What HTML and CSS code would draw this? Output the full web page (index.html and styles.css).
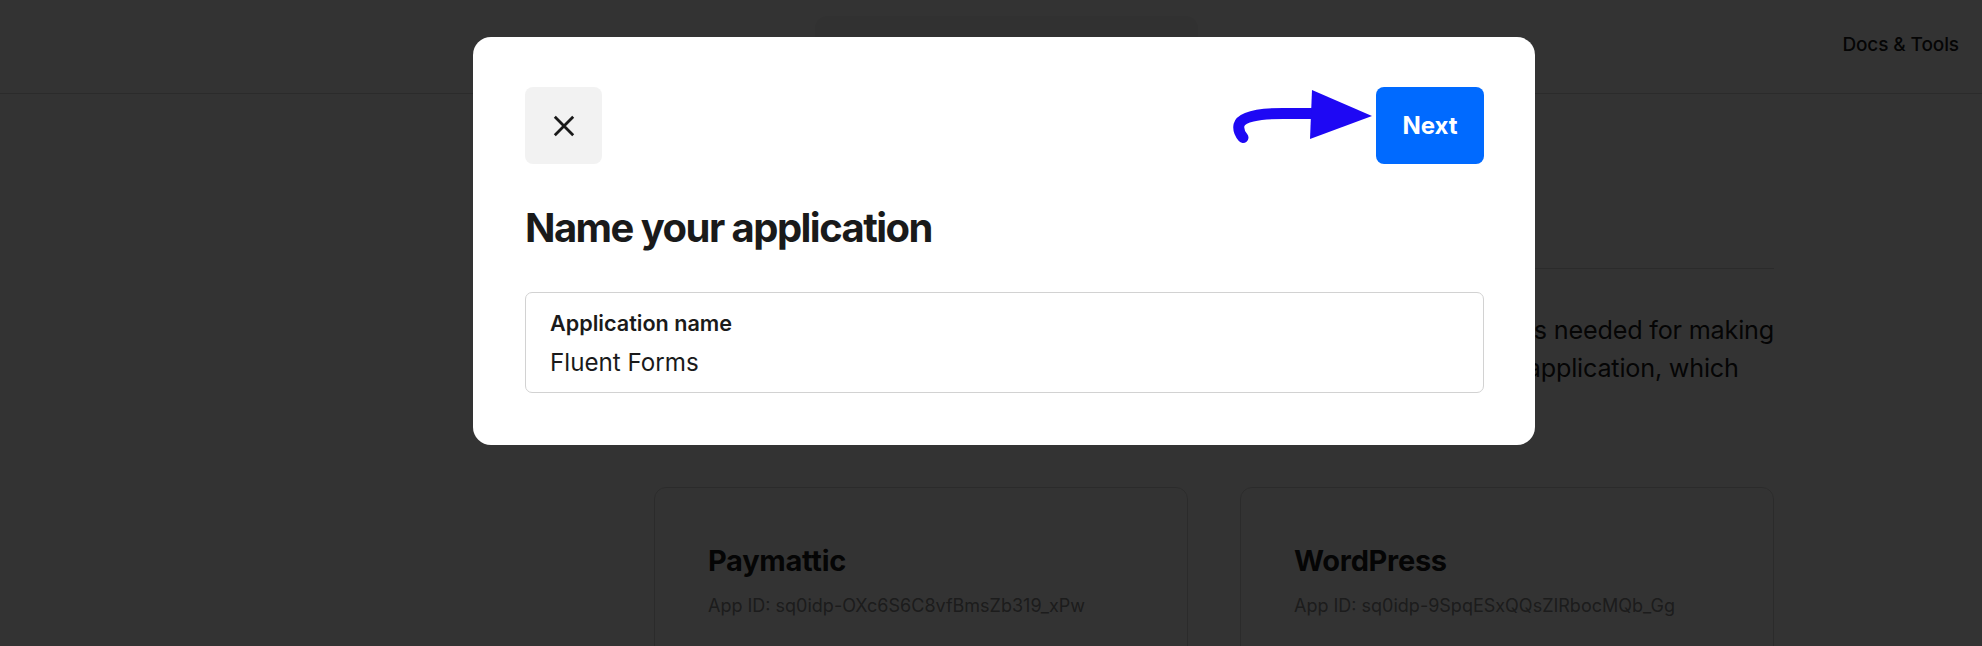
FILE: index.html
```html
<!DOCTYPE html>
<html lang="en">
<head>
<meta charset="utf-8">
<title>Name your application</title>
<link rel="stylesheet" href="styles.css">
</head>
<body>
<div class="page">
  <header class="topbar">
    <div class="ghost-box"></div>
    <nav class="topnav"><a class="topnav-link" href="#">Docs &amp; Tools</a></nav>
  </header>
  <main class="content">
    <section class="intro">
      <div class="intro-col"></div>
      <div class="intro-col intro-col-text">
        <p class="intro-text">The Square application is needed for making<br>API requests from your application, which</p>
      </div>
    </section>
    <section class="apps">
      <article class="app-card">
        <h2 class="app-name">Paymattic</h2>
        <p class="app-id">App ID: sq0idp-OXc6S6C8vfBmsZb319_xPw</p>
      </article>
      <article class="app-card">
        <h2 class="app-name">WordPress</h2>
        <p class="app-id">App ID: sq0idp-9SpqESxQQsZIRbocMQb_Gg</p>
      </article>
    </section>
  </main>
</div>

<div class="overlay">
  <div class="modal">
    <div class="modal-head">
      <button class="close-btn" type="button" aria-label="Close">
        <svg class="close-icon" viewBox="0 0 22 22" width="22" height="22"><path d="M1.8 1.8 L20.2 20.2 M20.2 1.8 L1.8 20.2" stroke="#1a1a1a" stroke-width="2.8" fill="none"/></svg>
      </button>
      <svg class="hint-arrow" viewBox="0 0 148 77" width="148" height="77">
        <path d="M86 26.5 L55 26.5 C30 26.5 13 30 11 38 C10 43 12 47 15 50.5" stroke="#1e08f4" stroke-width="11" stroke-linecap="round" fill="none"/>
        <polygon points="84,3 82,52 144,29" fill="#1e08f4"/>
      </svg>
      <button class="next-btn" type="button">Next</button>
    </div>
    <h1 class="modal-title">Name your application</h1>
    <label class="field">
      <span class="field-label">Application name</span>
      <span class="field-value">Fluent Forms</span>
    </label>
  </div>
</div>
</body>
</html>
```

FILE: styles.css
```css
* { box-sizing: border-box; }

html, body {
  margin: 0;
  padding: 0;
}

body {
  width: 1982px;
  height: 646px;
  overflow: hidden;
  background: #ffffff;
  font-family: Inter, "Noto Sans", "Liberation Sans", sans-serif;
  color: #1a1a1a;
}

/* ---------- underlying page ---------- */
.page {
  width: 100%;
}

.topbar {
  height: 94px;
  border-bottom: 1px solid #d8d8d8;
  display: flex;
  align-items: flex-start;
  padding: 0 23px 0 815px;
}

.ghost-box {
  width: 383px;
  height: 70px;
  margin-top: 16px;
  border-radius: 12px;
  background: #f3f3f3;
}

.topnav {
  margin-left: auto;
  margin-top: 33px;
}

.topnav-link {
  font-size: 19px;
  line-height: 23px;
  font-weight: 500;
  color: #1a1a1a;
  text-decoration: none;
  letter-spacing: -0.1px;
}

.content {
  margin-left: 654px;
  width: 1120px;
}

.intro {
  display: grid;
  grid-template-columns: 1fr 1fr;
  column-gap: 52px;
  margin-top: 174px;
}

.intro-col-text {
  border-top: 1px solid #d8d8d8;
}

.intro-text {
  margin: 42px 0 0;
  padding-left: 14px;
  font-size: 25.2px;
  line-height: 38px;
  color: #1a1a1a;
  letter-spacing: -0.2px;
  white-space: nowrap;
}

.apps {
  display: grid;
  grid-template-columns: 1fr 1fr;
  column-gap: 52px;
  margin-top: 100px;
}

.app-card {
  border: 1px solid #d8d8d8;
  border-radius: 12px;
  padding: 56px 53px 60px;
  min-height: 240px;
}

.app-name {
  margin: 0;
  font-size: 29px;
  line-height: 34px;
  font-weight: 700;
  color: #1a1a1a;
  letter-spacing: -0.3px;
}

.app-id {
  margin: 16px 0 0;
  font-size: 18px;
  line-height: 24px;
  color: #8a8a8a;
}

/* ---------- overlay + modal ---------- */
.overlay {
  position: fixed;
  inset: 0;
  background: rgba(0, 0, 0, 0.8);
  display: flex;
  justify-content: center;
  align-items: flex-start;
  padding: 37px 0 0 26px;
}

.modal {
  width: 1062px;
  background: #ffffff;
  border-radius: 18px;
  padding: 50px 51px 52px 52px;
}

.modal-head {
  display: flex;
  align-items: center;
  height: 77px;
}

.close-btn {
  width: 77px;
  height: 77px;
  border: none;
  border-radius: 8px;
  background: #f2f2f2;
  padding: 0;
  display: flex;
  align-items: center;
  justify-content: center;
  cursor: pointer;
}

.close-icon {
  display: block;
}

.hint-arrow {
  display: block;
  margin-left: auto;
}

.next-btn {
  width: 108px;
  height: 77px;
  border: none;
  border-radius: 8px;
  background: #006aff;
  color: #ffffff;
  font-family: Inter, "Noto Sans", "Liberation Sans", sans-serif;
  font-size: 24px;
  font-weight: 700;
  padding: 0;
  cursor: pointer;
}

.modal-title {
  margin: 40px 0 0;
  font-size: 40px;
  line-height: 48px;
  font-weight: 700;
  letter-spacing: -1.55px;
  color: #1a1a1a;
}

.field {
  display: flex;
  flex-direction: column;
  margin-top: 40px;
  height: 101px;
  border: 1px solid #d2d2d2;
  border-radius: 7px;
  padding: 17px 24px 0;
}

.field-label {
  font-size: 21.6px;
  line-height: 26px;
  font-weight: 600;
  color: #1a1a1a;
}

.field-value {
  margin-top: 12px;
  font-size: 24.2px;
  line-height: 30px;
  font-weight: 400;
  color: #1a1a1a;
}
```
